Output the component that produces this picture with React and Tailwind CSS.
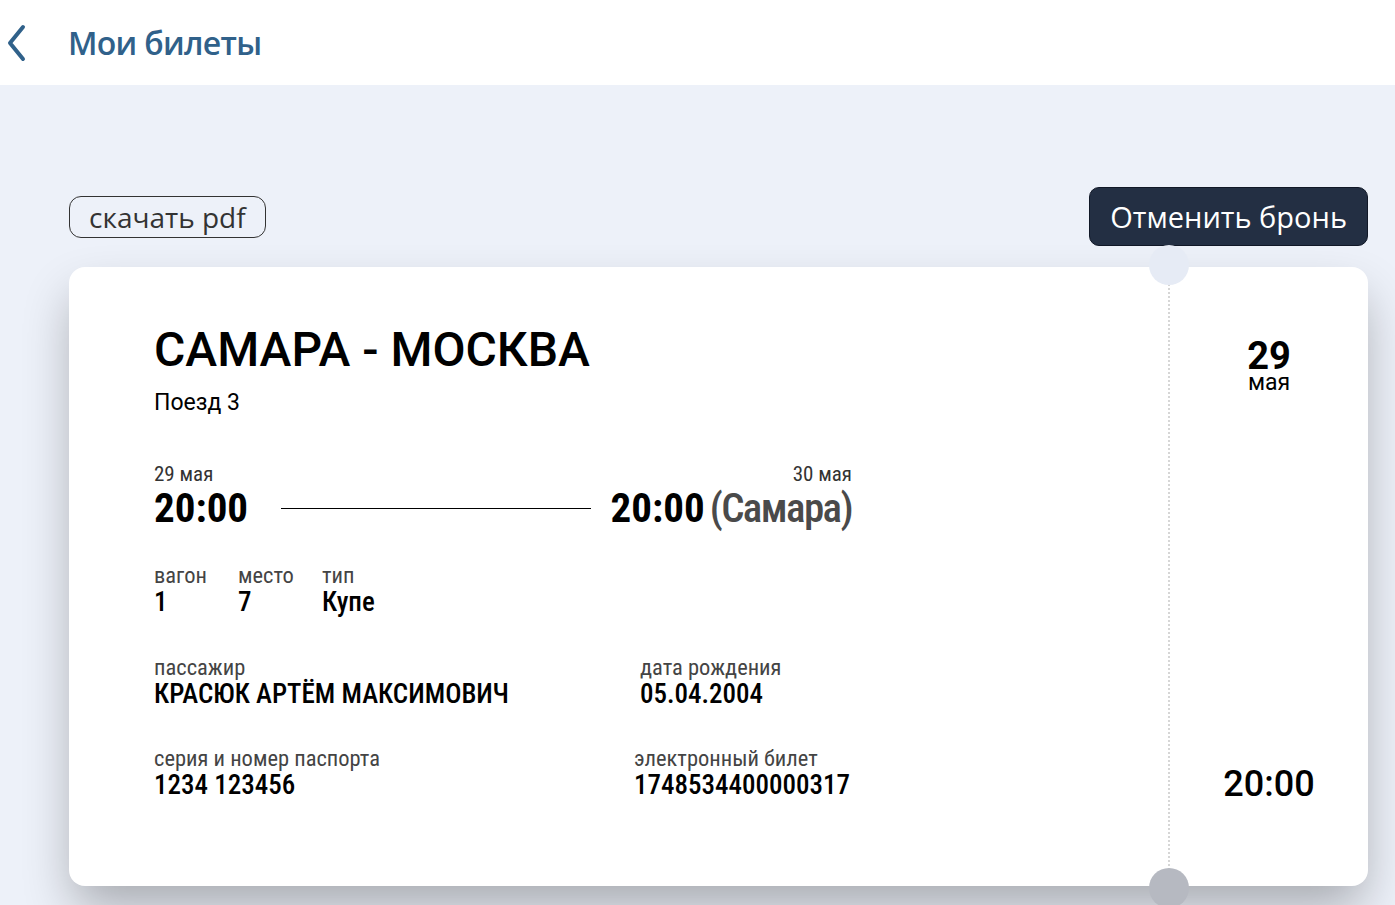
import React from 'react';

/**
 * Ticket page: header, actions, ticket card with tear-off stub
 */
const Field = ({ label, value, className = '' }) => (
  <div className={className}>
    <div className="text-[22.5px] leading-[22px] text-[#444]">{label}</div>
    <div className="mt-[3px] text-[27px] leading-[27px] font-medium text-black">{value}</div>
  </div>
);

const App = () => {
  return (
    <div className="min-h-screen bg-[#edf1f9] font-['Roboto_Condensed',Roboto,sans-serif]">
      {/* Header */}
      <header className="h-[85px] bg-white flex items-center">
        <button className="ml-[5px] w-[24px] h-[40px] flex items-center justify-center text-[#30618a]">
          <svg width="22" height="38" viewBox="0 0 22 38" fill="none">
            <path d="M17 3 L4 19 L17 35" stroke="currentColor" strokeWidth="4" strokeLinecap="round" strokeLinejoin="round" />
          </svg>
        </button>
        <h1 className="ml-[39px] font-['Open_Sans',sans-serif] text-[32px] font-semibold tracking-[-0.7px] text-[#30618a]">
          Мои билеты
        </h1>
      </header>

      <main className="pt-[102px] pl-[69px] pr-[27px]">
        {/* Actions */}
        <div className="flex items-center justify-between h-[59px]">
          <button className="h-[42px] px-[19px] rounded-[12px] border border-[#333] font-['Open_Sans',sans-serif] text-[28px] leading-none text-[#333]">
            скачать pdf
          </button>
          <button className="h-[59px] px-[20px] rounded-[10px] border border-[#111827] bg-[#232f43] font-['Open_Sans',sans-serif] text-[29px] leading-none text-white">
            Отменить бронь
          </button>
        </div>

        {/* Ticket */}
        <div className="relative mt-[21px] h-[619px] flex bg-white rounded-2xl shadow-[0_25px_50px_-5px_rgba(0,0,0,0.3)]">
          <div className="w-[1099px] pl-[85px] pt-[59px]">
            <h2 className="font-['Roboto',sans-serif] text-[48px] leading-[48px] font-medium text-black">САМАРА - МОСКВА</h2>
            <div className="mt-[17px] font-['Roboto',sans-serif] text-[23px] leading-[23px] text-black">Поезд 3</div>

            <div className="mt-[50px] w-[698px]">
              <div className="flex justify-between text-[21px] leading-[20px] text-[#333]">
                <span>29 мая</span>
                <span>30 мая</span>
              </div>
              <div className="mt-[4px] flex items-center text-[41px] leading-[40px]">
                <span className="font-bold text-black">20:00</span>
                <div className="flex-1 h-px bg-black ml-[33px] mr-[20px]" />
                <span className="font-bold text-black">20:00</span>
                <span className="ml-[5px] font-medium tracking-[-1.6px] text-[#4a4a4a]">(Самара)</span>
              </div>
            </div>

            <div className="mt-[36px] flex">
              <Field label="вагон" value="1" className="w-[84px]" />
              <Field label="место" value="7" className="w-[84px]" />
              <Field label="тип" value="Купе" />
            </div>

            <div className="mt-[40px] flex">
              <Field label="пассажир" value="КРАСЮК АРТЁМ МАКСИМОВИЧ" className="w-[486px]" />
              <Field label="дата рождения" value="05.04.2004" />
            </div>

            <div className="mt-[39px] flex">
              <Field label="серия и номер паспорта" value="1234 123456" className="w-[480px]" />
              <Field label="электронный билет" value="1748534400000317" />
            </div>
          </div>

          {/* Stub */}
          <div className="flex-1 border-l-2 border-dotted border-[#d6d6d6] flex flex-col items-center justify-between pt-[72px] pb-[84px] font-['Roboto',sans-serif] text-black">
            <div className="flex flex-col items-center">
              <span className="text-[38px] leading-[34px] font-bold">29</span>
              <span className="text-[23px] leading-[20px]">мая</span>
            </div>
            <span className="text-[36px] leading-[36px] font-medium">20:00</span>
          </div>

          {/* Notches */}
          <div className="absolute left-[1080px] top-[-22px] w-[40px] h-[40px] rounded-full bg-[#e6ebf5]" />
          <div className="absolute left-[1080px] top-[601px] w-[40px] h-[40px] rounded-full bg-[#b6b9c1]" />
        </div>
      </main>
    </div>
  );
};

export default App;
